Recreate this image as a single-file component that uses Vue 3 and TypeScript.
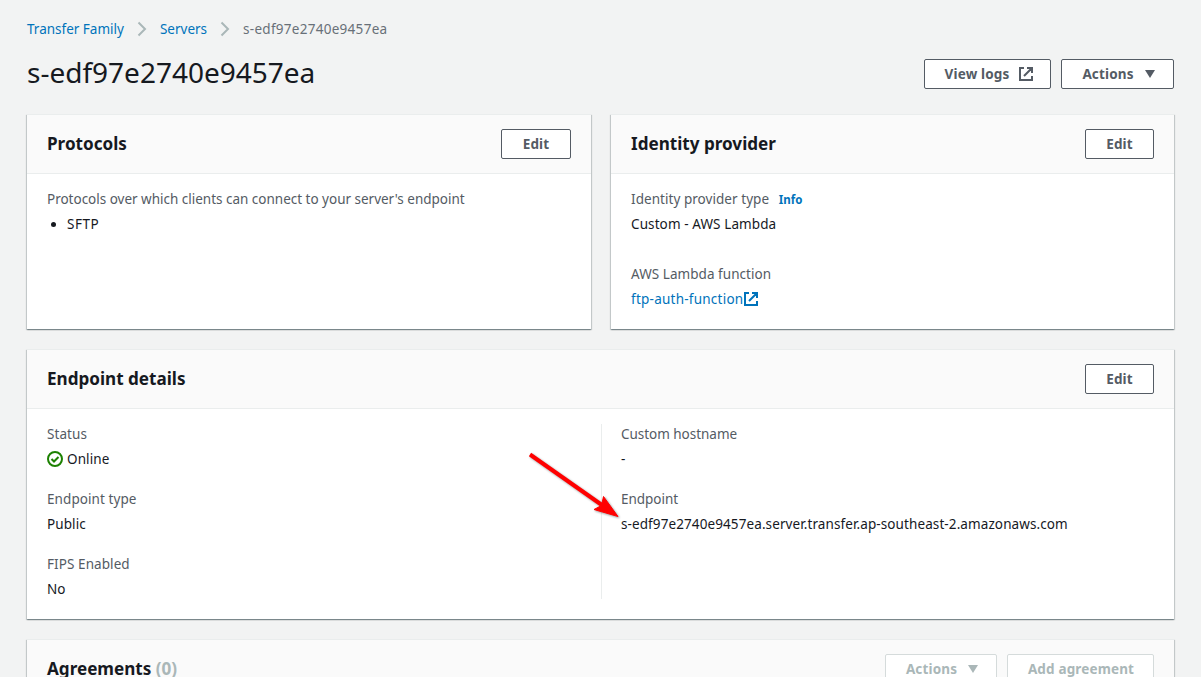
<script setup lang="ts">
interface Field { label: string; value: string; online?: boolean }
const left: Field[] = [
  { label: 'Status', value: 'Online', online: true },
  { label: 'Endpoint type', value: 'Public' },
  { label: 'FIPS Enabled', value: 'No' },
]
const right: Field[] = [
  { label: 'Custom hostname', value: '-' },
  { label: 'Endpoint', value: 's-edf97e2740e9457ea.server.transfer.ap-southeast-2.amazonaws.com' },
]
</script>

<template>
  <main class="page">
    <nav class="crumbs">
      <a>Transfer Family</a>
      <svg class="chev" viewBox="0 0 10 16"><path d="M1.500 1.500 8 8l-6.500 6.500" /></svg>
      <a>Servers</a>
      <svg class="chev" viewBox="0 0 10 16"><path d="M1.500 1.500 8 8l-6.500 6.500" /></svg>
      <span>s-edf97e2740e9457ea</span>
    </nav>
    <header class="top">
      <h1>s-edf97e2740e9457ea</h1>
      <div class="actions">
        <button class="logs">View logs
          <svg class="ext" viewBox="0 0 16 16"><path d="M6 2H2v12h12v-4M9 2h5v5M6 10l8-8" /></svg>
        </button>
        <button class="menu">Actions <i class="caret" /></button>
      </div>
    </header>
    <div class="cards">
      <section class="card">
        <div class="head"><h2>Protocols</h2><button class="edit wide">Edit</button></div>
        <div class="body">
          <div class="label long">Protocols over which clients can connect to your server's endpoint</div>
          <ul><li>SFTP</li></ul>
        </div>
      </section>
      <section class="card">
        <div class="head"><h2>Identity provider</h2><button class="edit">Edit</button></div>
        <div class="body">
          <div class="label idp">Identity provider type <a class="info">Info</a></div>
          <div class="value">Custom - AWS Lambda</div>
          <div class="label idp lambda">AWS Lambda function</div>
          <a class="fn">ftp-auth-function<svg class="ext" viewBox="0 0 16 16"><path d="M6 2H2v12h12v-4M9 2h5v5M6 10l8-8" /></svg></a>
        </div>
      </section>
    </div>
    <section class="card endpoint">
      <div class="head"><h2>Endpoint details</h2><button class="edit">Edit</button></div>
      <div class="cols">
        <div class="col">
          <div v-for="f in left" :key="f.label" class="field">
            <div class="label">{{ f.label }}</div>
            <div v-if="f.online" class="value status">
              <svg viewBox="0 0 16 16"><circle cx="8" cy="8" r="7" /><path d="m4.500 8 2.500 2.500L11.500 6" /></svg>{{ f.value }}
            </div>
            <div v-else class="value">{{ f.value }}</div>
          </div>
        </div>
        <div class="col second">
          <div v-for="f in right" :key="f.label" class="field">
            <div class="label host">{{ f.label }}</div>
            <div class="value">{{ f.value }}</div>
          </div>
        </div>
      </div>
    </section>
    <section class="card agreements">
      <div class="head">
        <h2>Agreements <span>(0)</span></h2>
        <div class="actions"><button class="menu off">Actions <i class="caret" /></button><button class="add off">Add agreement</button></div>
      </div>
    </section>
    <svg class="arrow" viewBox="0 0 96 70"><path class="shaft" d="M4 4.500 78 56.500" /><path class="tip" d="M92 66.500 68 59.500 75.500 55.500 77.500 46.500z" /></svg>
  </main>
</template>

<style>
body { margin: 0; overflow: hidden; background: #f2f3f3; }
</style>
<style scoped>
.page { position: relative; box-sizing: border-box; height: 677px; overflow: hidden; padding: 18px 27px 0; font: 13.500px/22px "Noto Sans", sans-serif; color: #16191f; background: #f2f3f3; }
* { box-sizing: border-box; }
a { color: #0073bb; }
h1, h2 { margin: 0; }
.crumbs { display: flex; align-items: center; height: 22px; color: #687078; }
.crumbs span { letter-spacing: .28px; }
.chev { width: 10px; height: 16px; margin: 0 13px; fill: none; stroke: #aab7b8; stroke-width: 2; }
.top { display: flex; justify-content: space-between; align-items: flex-start; height: 74px; padding-top: 15px; }
h1 { font-size: 28px; line-height: 36px; font-weight: 400; margin-top: -1px; }
.actions { display: flex; gap: 10px; }
.top .actions { padding-top: 4px; }
button { display: flex; align-items: center; justify-content: center; height: 30px; padding: 0; border: 1px solid #545b64; border-radius: 2px; background: #fff; color: #545b64; font: 700 13.500px/20px "Noto Sans", sans-serif; letter-spacing: .15px; white-space: nowrap; }
.logs { width: 127px; gap: 9px; padding-left: 4px; }
.menu { width: 113px; gap: 11px; padding-left: 2px; }
.edit { width: 69px; }
.wide { width: 70px; }
.add { width: 147px; padding-left: 1px; }
.off { border-color: #d5dbdb; color: #aab7b8; }
.off.menu { width: 112px; }
.caret { width: 0; height: 0; border: 5.500px solid transparent; border-top: 8px solid currentColor; border-bottom: 0; }
.ext { width: 16px; height: 16px; fill: none; stroke: currentColor; stroke-width: 2; }
.cards { display: grid; grid-template-columns: 564px 563px; gap: 20px; height: 215px; }
.card { background: #fff; border-top: 1px solid #eaeded; box-shadow: 0 1px 1px 0 rgba(0, 28, 36, .3), 1px 1px 1px 0 rgba(0, 28, 36, .15), -1px 1px 1px 0 rgba(0, 28, 36, .15); }
.head { display: flex; align-items: center; justify-content: space-between; height: 59px; padding: 0 20px; background: #fafafa; border-bottom: 1px solid #eaeded; }
h2 { font-size: 17.100px; line-height: 22px; font-weight: 700; margin-top: -1px; }
.body { padding: 14px 20px; }
.label { color: #545b64; line-height: 22px; letter-spacing: .08px; }
.long { letter-spacing: -.01px; }
.host { letter-spacing: -.03px; }
.idp { letter-spacing: .05px; }
.value { margin-top: 3px; line-height: 22px; letter-spacing: .1px; }
ul { margin: 3px 0 0; padding-left: 20px; letter-spacing: .5px; }
.info { margin-left: 6px; font-size: 11.500px; line-height: 1; font-weight: 700; }
.lambda { margin-top: 28px; }
.fn { display: flex; align-items: center; margin-top: 3px; letter-spacing: .24px; }
.endpoint { height: 270px; margin-top: 20px; }
.cols { display: flex; padding: 15px 20px; }
.col { width: 554px; height: 176px; }
.field { height: 65px; position: static; }
.col > .field:first-child { margin-top: -1px; }
.col { display: flow-root; }
.second { margin-left: 1px; border-left: 1px solid #eaeded; padding-left: 19px; height: 175px; }
.status { display: flex; align-items: center; gap: 4px; }
.status svg { width: 16px; height: 16px; fill: none; stroke: #1d8102; stroke-width: 2; }
.agreements { height: 80px; margin-top: 20px; }
h2 span { color: #aab7b8; }
.arrow { position: absolute; left: 526px; top: 450px; width: 96px; height: 70px; filter: drop-shadow(1px 1px 1px rgba(0, 0, 0, .4)); }
.shaft { stroke: #f00; stroke-width: 4; }
.tip { fill: #f00; stroke: #f00; stroke-width: 1; }
</style>
